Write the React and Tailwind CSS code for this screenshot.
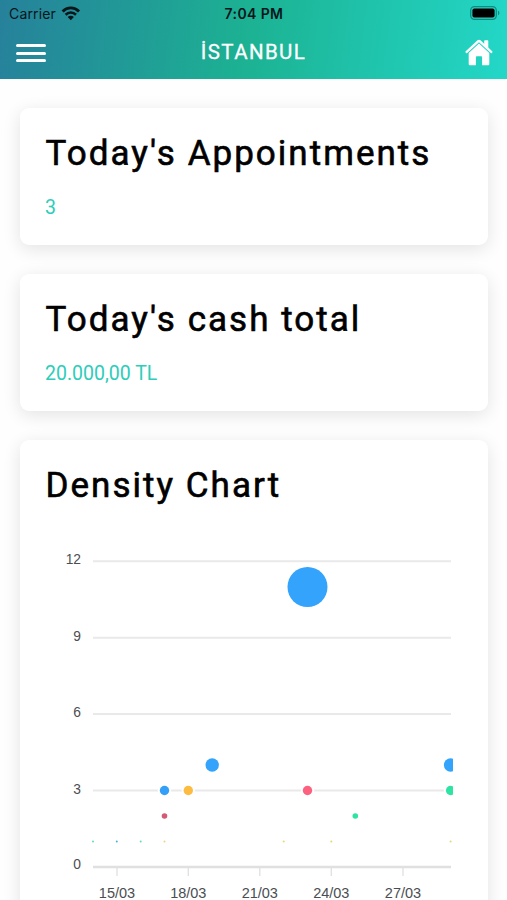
import clsx from 'clsx';

const gridLines = [
  { label: '12', y: 561.3 },
  { label: '9', y: 637.8 },
  { label: '6', y: 714 },
  { label: '3', y: 790.5 },
];

const dates = [
  { label: '15/03', x: 117 },
  { label: '18/03', x: 188.3 },
  { label: '21/03', x: 259.8 },
  { label: '24/03', x: 331.3 },
  { label: '27/03', x: 403 },
];

const bubbles = [
  { x: 307.5, y: 587, r: 20, color: '#33a3fc' },
  { x: 212.2, y: 765, r: 6.7, color: '#33a3fc' },
  { x: 164.5, y: 790.5, r: 4.7, color: '#339ff8' },
  { x: 188.3, y: 790.5, r: 4.7, color: '#fdbb40' },
  { x: 307.5, y: 790.5, r: 4.7, color: '#fc6180' },
  { x: 450.6, y: 765, r: 6.7, color: '#33a3fc' },
  { x: 450.6, y: 790.5, r: 4.7, color: '#2fe3a2' },
  { x: 164.5, y: 816, r: 2.8, color: '#d35b75' },
  { x: 355.3, y: 816, r: 2.8, color: '#2fe3a2' },
  { x: 93, y: 841.5, r: 1, color: '#5fe0b4' },
  { x: 116.8, y: 841.5, r: 1, color: '#55acd6' },
  { x: 140.7, y: 841.5, r: 1, color: '#5fe0b4' },
  { x: 164.5, y: 841.5, r: 1, color: '#fbcb84' },
  { x: 283.7, y: 841.5, r: 1, color: '#e3d877' },
  { x: 331.3, y: 841.5, r: 1, color: '#e3d877' },
  { x: 450.6, y: 841.5, r: 1, color: '#e3d877' },
];

function WifiIcon() {
  return (
    <svg width="20" height="16" viewBox="0 0 20 16" fill="none" stroke="#07161a" className="ml-[5px] -mt-[2px]">
      <path d="M1.6 6.4C6.2 1.7 13.4 1.7 18 6.4" strokeWidth="2.9" />
      <path d="M4.6 9.7C7.6 6.8 12 6.8 15 9.7" strokeWidth="2.6" />
      <path d="M9.8 15.2L6.7 12C8.4 10.4 11.2 10.4 12.9 12Z" fill="#07161a" stroke="none" />
    </svg>
  );
}

function BatteryIcon() {
  return (
    <svg width="31" height="14" viewBox="0 0 31 14" fill="none" className="-mt-px">
      <rect x="0.7" y="0.7" width="25.6" height="12.6" rx="3.8" stroke="#128a81" strokeWidth="1.3" />
      <rect x="2.4" y="2.4" width="22.2" height="9.2" rx="2" fill="#000" />
      <path d="M28 4.8C29.8 5.4 29.8 8.6 28 9.2Z" fill="#128a81" />
    </svg>
  );
}

function HomeIcon() {
  return (
    <svg width="28" height="27" viewBox="0 0 28 27" fill="#fff" className="-mt-[2px]">
      <path d="M14 .7c.6 0 1.1.2 1.5.6L19.2 4.8V2c0-.5.3-.8.8-.8h2.5c.5 0 .8.3.8.8v6.6l3.9 3.7c.4.4.4.8.1 1.2l-.5.6c-.3.3-.7.3-1 0L14 3.3 2.2 14.1c-.4.3-.8.3-1.1 0l-.5-.6c-.3-.4-.3-.8.1-1.2L12.5 1.3c.4-.4.9-.6 1.5-.6Z" />
      <path d="M14 4.6l10.3 9.4V25c0 .8-.5 1.3-1.3 1.3h-5.9v-8.2c0-.5-.3-.8-.8-.8h-4.6c-.5 0-.8.3-.8.8v8.2H5c-.8 0-1.3-.5-1.3-1.3V14Z" />
    </svg>
  );
}

function Header() {
  return (
    <header className="h-[79px] shrink-0 bg-[linear-gradient(97deg,#26819b_0%,#1cb293_49%,#23d7c7_100%)]">
      <div className="grid h-[27px] grid-cols-3 items-center font-[Inter] text-[14px] text-[#07161a]">
        <div className="flex items-center pl-[9px]">
          <span className="tracking-[0.15px]">Carrier</span>
          <WifiIcon />
        </div>
        <span className="pl-px text-center text-[14px] font-semibold tracking-[0.4px]">7:04 PM</span>
        <div className="flex justify-end pr-[6px]">
          <BatteryIcon />
        </div>
      </div>
      <div className="grid h-[52px] grid-cols-3 items-center">
        <div className="flex flex-col gap-[4.5px] pl-4">
          <span className="h-[3px] w-[30px] rounded-full bg-white" />
          <span className="h-[3px] w-[30px] rounded-full bg-white" />
          <span className="h-[3px] w-[30px] rounded-full bg-white" />
        </div>
        <h1 className="-mt-px text-center text-[20.5px] tracking-[1.4px] text-white [-webkit-text-stroke:0.3px_white]">İSTANBUL</h1>
        <div className="flex justify-end pr-[14px]">
          <HomeIcon />
        </div>
      </div>
    </header>
  );
}

function Card({ title, value, className, children }) {
  return (
    <section
      className={clsx(
        'shrink-0 rounded-[9px] bg-white pt-[25px] shadow-[0_4px_18px_rgba(0,0,0,0.11)]',
        className
      )}
    >
      <h2 className="pl-[25.5px] text-[35px] leading-[41px] tracking-[2.02px] whitespace-nowrap text-black [-webkit-text-stroke:0.6px_black]">
        {title}
      </h2>
      {value && <p className="mt-[22px] pl-[25px] text-[19.5px] leading-6 text-[#2dcdb9]">{value}</p>}
      {children}
    </section>
  );
}

function DensityChart() {
  return (
    <svg width="468" height="400" viewBox="20 506 468 400" className="block font-['Liberation_Sans',sans-serif]">
      <defs>
        <clipPath id="plot">
          <rect x="80" y="540" width="373" height="340" />
        </clipPath>
      </defs>
      {gridLines.map((line) => (
        <g key={line.label}>
          <line x1="93" x2="451" y1={line.y} y2={line.y} stroke="#e9e9e9" strokeWidth="2" />
          <text x="81" y={line.y + 3} textAnchor="end" fontSize="13.8" fill="#4a4e52">{line.label}</text>
        </g>
      ))}
      <text x="81" y="869" textAnchor="end" fontSize="13.8" fill="#4a4e52">0</text>
      <line x1="93" x2="451" y1="867" y2="867" stroke="#e0e0e0" strokeWidth="2.4" />
      {dates.map((date) => (
        <g key={date.label}>
          <line x1={date.x} x2={date.x} y1="868" y2="876" stroke="#e0e0e0" strokeWidth="1.3" />
          <text x={date.x} y="897.5" textAnchor="middle" fontSize="14.5" fill="#4a4e52">{date.label}</text>
        </g>
      ))}
      <g clipPath="url(#plot)">
        {bubbles.map((b) => (
          <g key={`${b.x}-${b.y}`}>
            {b.r > 2 && <circle cx={b.x} cy={b.y} r={b.r + 2} fill="#fff" />}
            <circle cx={b.x} cy={b.y} r={b.r} fill={b.color} />
          </g>
        ))}
      </g>
    </svg>
  );
}

export default function App() {
  return (
    <div className="flex h-[900px] w-[507px] flex-col overflow-hidden bg-[#fefefe] font-[Roboto,sans-serif]">
      <Header />
      <main className="flex flex-col gap-[28.5px] pt-[28.5px] pr-[19.5px] pl-5">
        <Card title="Today's Appointments" value="3" className="h-[137.5px]" />
        <Card title="Today's cash total" value="20.000,00 TL" className="h-[137.5px]" />
        <Card title="Density Chart" className="h-[500px]">
          <DensityChart />
        </Card>
      </main>
    </div>
  );
}
